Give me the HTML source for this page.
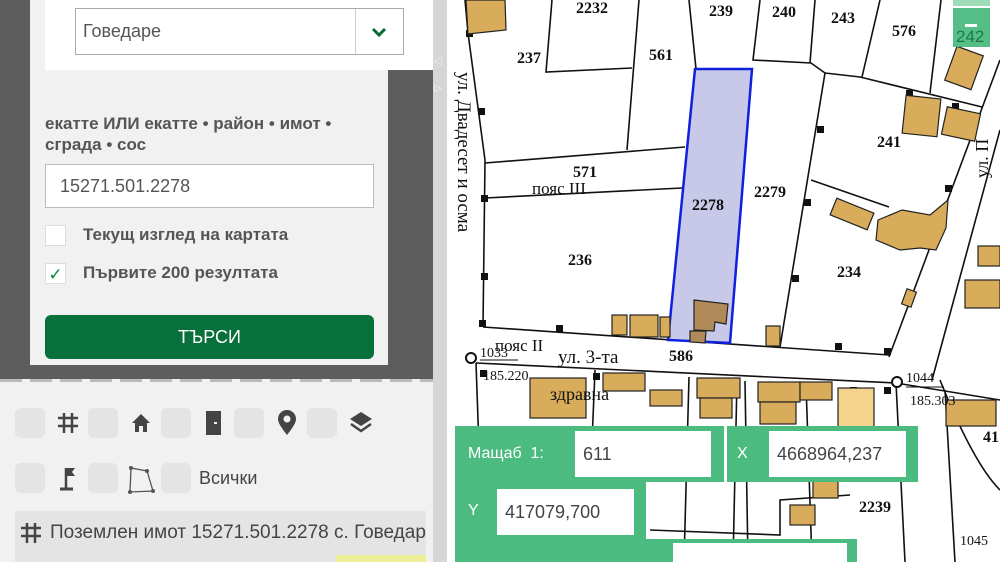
<!DOCTYPE html>
<html><head><meta charset="utf-8"><style>
*{margin:0;padding:0;box-sizing:border-box}
body{width:1000px;height:562px;overflow:hidden;position:relative;background:#fff;font-family:"Liberation Sans","DejaVu Sans",sans-serif}
.abs{position:absolute}
.sq{position:absolute;width:30px;height:30px;border-radius:6px;background:#e4e4e4}
.in{position:absolute;background:#fff;color:#444;font-size:18px;padding-left:8px;display:flex;align-items:center}
.lbl{position:absolute;color:#fff;font-size:16px}
</style></head><body>
<svg class="abs" style="left:0;top:0" width="1000" height="562" viewBox="0 0 1000 562">
<rect x="447" y="0" width="553" height="562" fill="#fff"/>
<g stroke="#111" stroke-width="1.6" fill="none">
<path d="M465 0 L468 33 L485 160 L483 327"/>
<path d="M552 0 L546 72 L632 68"/>
<path d="M639 0 L627 150"/>
<path d="M485 163 L685 147"/>
<path d="M485 198 L682 188"/>
<path d="M689 0 L696 69"/>
<path d="M760 0 L753 60 L811 63 L825 73 L860 77 L982 107"/>
<path d="M825 73 L780 347"/>
<path d="M815 0 L810 63"/>
<path d="M880 0 L862 77"/>
<path d="M941 0 L930 93"/>
<path d="M811 180 L889 207"/>
<path d="M1000 60 L889 357"/>
<path d="M1000 130 L932 380"/>
<path d="M978 253 L1000 262"/>
<path d="M483 327 L889 355"/>
<path d="M476 363 L896 383 L1000 400"/>
<path d="M476 363 L483 562"/>
<path d="M595 370 L587 562"/>
<path d="M689 377 L684 562"/>
<path d="M737 380 L733 562"/>
<path d="M745 381 L748 562"/>
<path d="M806 384 L812 562"/>
<path d="M896 383 L905 562"/>
<path d="M945 390 L955 562"/>
<path d="M940 380 C960 430 980 470 1000 490"/>
<path d="M650 530 L780 535 L780 500 L850 495"/>
</g>
<g fill="#111">
<rect x="466" y="30" width="7" height="7"/><rect x="478" y="108" width="7" height="7"/><rect x="481" y="195" width="7" height="7"/><rect x="481" y="273" width="7" height="7"/><rect x="479" y="320" width="7" height="7"/><rect x="556" y="325" width="7" height="7"/><rect x="817" y="126" width="7" height="7"/><rect x="804" y="199" width="7" height="7"/><rect x="792" y="275" width="7" height="7"/><rect x="835" y="343" width="7" height="7"/><rect x="884" y="348" width="7" height="7"/><rect x="906" y="90" width="7" height="7"/><rect x="952" y="103" width="7" height="7"/><rect x="945" y="185" width="7" height="7"/><rect x="480" y="370" width="7" height="7"/><rect x="593" y="373" width="7" height="7"/><rect x="884" y="387" width="7" height="7"/><rect x="850" y="387" width="7" height="7"/>
</g>
<polygon points="695,69 752,69 730,343 668,340" fill="#c8c9e8" stroke="#1020e0" stroke-width="2.5"/>
<g fill="#d9ac5b" stroke="#222" stroke-width="1.2">
<polygon points="466,0 505,0 506,30 468,34"/>
<polygon points="694,300 728,304 726,324 715,322 714,331 694,330" fill="#b08a5a"/>
<polygon points="690,331 706,331 705,343 690,342" fill="#b08a5a"/>
<rect x="612" y="315" width="15" height="20"/><rect x="630" y="315" width="28" height="22"/><rect x="660" y="317" width="10" height="20"/>
<rect x="766" y="326" width="14" height="20"/>
<rect x="904" y="97" width="35" height="38" transform="rotate(6 921 116)"/>
<rect x="944" y="110" width="34" height="28" transform="rotate(12 961 124)"/>
<rect x="950" y="50" width="28" height="36" transform="rotate(20 964 68)"/>
<rect x="832" y="205" width="40" height="18" transform="rotate(22 852 214)"/>
<polygon points="878,220 902,210 930,215 948,200 946,228 936,250 920,248 900,250 876,240"/>
<rect x="904" y="290" width="10" height="16" transform="rotate(20 909 298)"/>
<rect x="965" y="280" width="35" height="28"/><rect x="978" y="246" width="22" height="20"/>
<rect x="530" y="378" width="56" height="40"/>
<rect x="603" y="373" width="42" height="18"/><rect x="650" y="390" width="32" height="16"/>
<rect x="697" y="378" width="43" height="20"/><rect x="700" y="398" width="32" height="20"/>
<rect x="758" y="382" width="42" height="20"/><rect x="760" y="402" width="36" height="22"/>
<rect x="800" y="382" width="32" height="18"/><rect x="838" y="388" width="36" height="40" fill="#f4d38d"/>
<rect x="946" y="400" width="50" height="26"/>
<rect x="813" y="480" width="25" height="18"/><rect x="790" y="505" width="25" height="20"/>
</g>
<g font-family="Liberation Serif,serif" font-weight="bold" font-size="16" fill="#111">
<text x="576" y="13">2232</text><text x="709" y="16">239</text><text x="772" y="17">240</text><text x="831" y="23">243</text><text x="892" y="36">576</text>
<text x="517" y="63">237</text><text x="649" y="60">561</text><text x="877" y="147">241</text>
<text x="573" y="177">571</text><text x="692" y="210">2278</text><text x="754" y="197">2279</text>
<text x="568" y="265">236</text><text x="837" y="277">234</text><text x="669" y="361">586</text>
<text x="859" y="512">2239</text><text x="983" y="442">41</text>
</g>
<g font-family="Liberation Serif,serif" font-size="17" fill="#111">
<text x="532" y="194" font-size="17">пояс III</text>
<text x="495" y="351">пояс II</text><text x="558" y="363" font-size="19">ул. 3-та</text>
<text x="480" y="357" font-size="14">1033</text><text x="483" y="380" font-size="14">185.220</text>
<text x="550" y="400" font-size="18">здравна</text>
<text x="906" y="382" font-size="14">1044</text><text x="910" y="405" font-size="14">185.303</text>
<text x="960" y="545" font-size="14">1045</text>
<text transform="translate(458,72) rotate(90)" font-size="19">ул. Двадесет и осма</text>
<text transform="translate(988,178) rotate(-90)" font-size="18">ул. П</text>
</g>
<line x1="480" y1="360" x2="518" y2="360" stroke="#111"/><line x1="906" y1="387" x2="944" y2="387" stroke="#111"/>
<circle cx="471" cy="358" r="5" fill="#fff" stroke="#111" stroke-width="2"/><circle cx="897" cy="382" r="5" fill="#fff" stroke="#111" stroke-width="2"/>
<g fill="#4cbb80">
<rect x="455" y="426" width="269" height="56"/><rect x="727" y="426" width="191" height="56"/>
<rect x="455" y="482" width="191" height="57"/><rect x="455" y="539" width="402" height="23"/>
<rect x="953" y="8" width="37" height="39" opacity="0.95"/><rect x="953" y="0" width="37" height="6" fill="#9edcb8"/>
</g>
<text x="956" y="42" font-size="17" font-family="Liberation Sans" fill="#1a7a45">242</text>
<rect x="965" y="24" width="12" height="3" fill="#fff"/>
</svg>
<div class="lbl" style="left:468px;top:445px">Мащаб&nbsp;&nbsp;1:</div>
<div class="lbl" style="left:737px;top:445px">X</div>
<div class="lbl" style="left:468px;top:502px">Y</div>
<div class="in" style="left:575px;top:431px;width:136px;height:46px">611</div>
<div class="in" style="left:769px;top:431px;width:137px;height:46px">4668964,237</div>
<div class="in" style="left:497px;top:489px;width:137px;height:46px">417079,700</div>
<div class="in" style="left:673px;top:543px;width:174px;height:19px"></div>
<div class="abs" style="left:0;top:0;width:433px;height:380px;background:#5d5d5d"></div>
<div class="abs" style="left:433px;top:0;width:14px;height:562px;background:#d6d6d6"></div>
<div class="abs" style="left:434px;top:56px;color:#f4f4f4;font-size:10px">◁</div>
<div class="abs" style="left:434px;top:83px;color:#f4f4f4;font-size:10px">▷</div>
<div class="abs" style="left:30px;top:0;width:358px;height:365px;background:#f1f1f1"></div>
<div class="abs" style="left:45px;top:0;width:388px;height:70px;background:#fff"></div>
<div class="abs" style="left:75px;top:8px;width:329px;height:47px;border:1px solid #aaa;background:#fff;font-size:18px;color:#555;padding:12px 0 0 7px">Говедаре
<div class="abs" style="left:279px;top:0;width:1px;height:45px;background:#ccc"></div>
<svg class="abs" style="left:295px;top:17px" width="16" height="12"><path d="M2 3 L8 9 L14 3" stroke="#0a6a36" stroke-width="3" fill="none"/></svg></div>
<div class="abs" style="left:45px;top:113px;font-size:17px;font-weight:bold;color:#555;line-height:21px;width:330px">екатте ИЛИ екатте • район • имот • сграда • сос</div>
<div class="abs" style="left:45px;top:164px;width:329px;height:44px;border:1px solid #bbb;background:#fff;font-size:18px;color:#555;padding:11px 0 0 14px">15271.501.2278</div>
<div class="abs" style="left:45px;top:225px;width:21px;height:21px;border:1px solid #ddd;background:#fff"></div>
<div class="abs" style="left:83px;top:225px;font-size:17px;font-weight:bold;color:#555">Текущ изглед на картата</div>
<div class="abs" style="left:45px;top:263px;width:21px;height:21px;border:1px solid #ddd;background:#fff;color:#0a8a3a;font-size:17px;text-align:center;line-height:21px">✓</div>
<div class="abs" style="left:83px;top:263px;font-size:17px;font-weight:bold;color:#555">Първите 200 резултата</div>
<div class="abs" style="left:45px;top:315px;width:329px;height:44px;border-radius:6px;background:#08703a;color:#fff;font-size:18px;text-align:center;line-height:44px">ТЪРСИ</div>
<div class="abs" style="left:0;top:380px;width:433px;height:182px;background:#f1f1f1"></div>
<div class="abs" style="left:0;top:379px;width:433px;height:3px;background:repeating-linear-gradient(90deg,#bbb 0 22px,#f1f1f1 22px 30px)"></div>
<div class="sq" style="left:15px;top:408px"></div><div class="sq" style="left:88px;top:408px"></div><div class="sq" style="left:161px;top:408px"></div><div class="sq" style="left:234px;top:408px"></div><div class="sq" style="left:307px;top:408px"></div>
<div class="sq" style="left:15px;top:463px"></div><div class="sq" style="left:88px;top:463px"></div><div class="sq" style="left:161px;top:463px"></div>
<svg class="abs" style="left:56px;top:411px" width="26" height="24"><g stroke="#444" stroke-width="2.5"><path d="M8 2V22M16 2V22M2 7H22M2 15H22"/></g></svg>
<svg class="abs" style="left:129px;top:411px" width="26" height="24"><path d="M3 12 L12 3 L21 12 L18 12 L18 21 L14 21 L14 15 L10 15 L10 21 L6 21 L6 12Z" fill="#444"/></svg>
<svg class="abs" style="left:203px;top:410px" width="22" height="26"><rect x="3" y="1" width="15" height="24" fill="#444"/><rect x="11" y="12" width="3" height="2" fill="#eee"/></svg>
<svg class="abs" style="left:276px;top:409px" width="22" height="28"><path d="M11 26 C4 17 2 13 2 10 A9 9 0 0 1 20 10 C20 13 18 17 11 26Z" fill="#444"/><circle cx="11" cy="10" r="3.5" fill="#f1f1f1"/></svg>
<svg class="abs" style="left:348px;top:410px" width="26" height="26"><path d="M13 2 L24 9 L13 16 L2 9Z" fill="#444"/><path d="M3 14 L13 21 L23 14" stroke="#444" stroke-width="2.5" fill="none"/></svg>
<svg class="abs" style="left:56px;top:465px" width="22" height="28"><path d="M10 3V23" stroke="#444" stroke-width="2.5"/><path d="M11 3 L19 3 L16 7 L19 11 L11 11Z" fill="#444"/><path d="M4 24H17" stroke="#444" stroke-width="3"/></svg>
<svg class="abs" style="left:125px;top:465px" width="32" height="30"><path d="M6 3 L22 6 L28 26 L5 27Z" stroke="#555" stroke-width="1.3" fill="none"/><g fill="#555"><circle cx="6" cy="3" r="2"/><circle cx="22" cy="6" r="2"/><circle cx="28" cy="26" r="2"/><circle cx="5" cy="27" r="2"/></g></svg>
<div class="abs" style="left:199px;top:468px;font-size:18px;color:#444">Всички</div>
<div class="abs" style="left:15px;top:511px;width:411px;height:51px;background:#e4e4e4;overflow:hidden">
<svg class="abs" style="left:5px;top:11px" width="22" height="22"><g stroke="#444" stroke-width="2.5"><path d="M7 1V21M15 1V21M1 6H21M1 14H21"/></g></svg>
<div class="abs" style="left:35px;top:11px;font-size:19px;color:#444;white-space:nowrap">Поземлен имот 15271.501.2278 с. Говедаре</div>
<div class="abs" style="left:321px;top:44px;width:90px;height:7px;background:#eeee99"></div>
</div>
</body></html>
